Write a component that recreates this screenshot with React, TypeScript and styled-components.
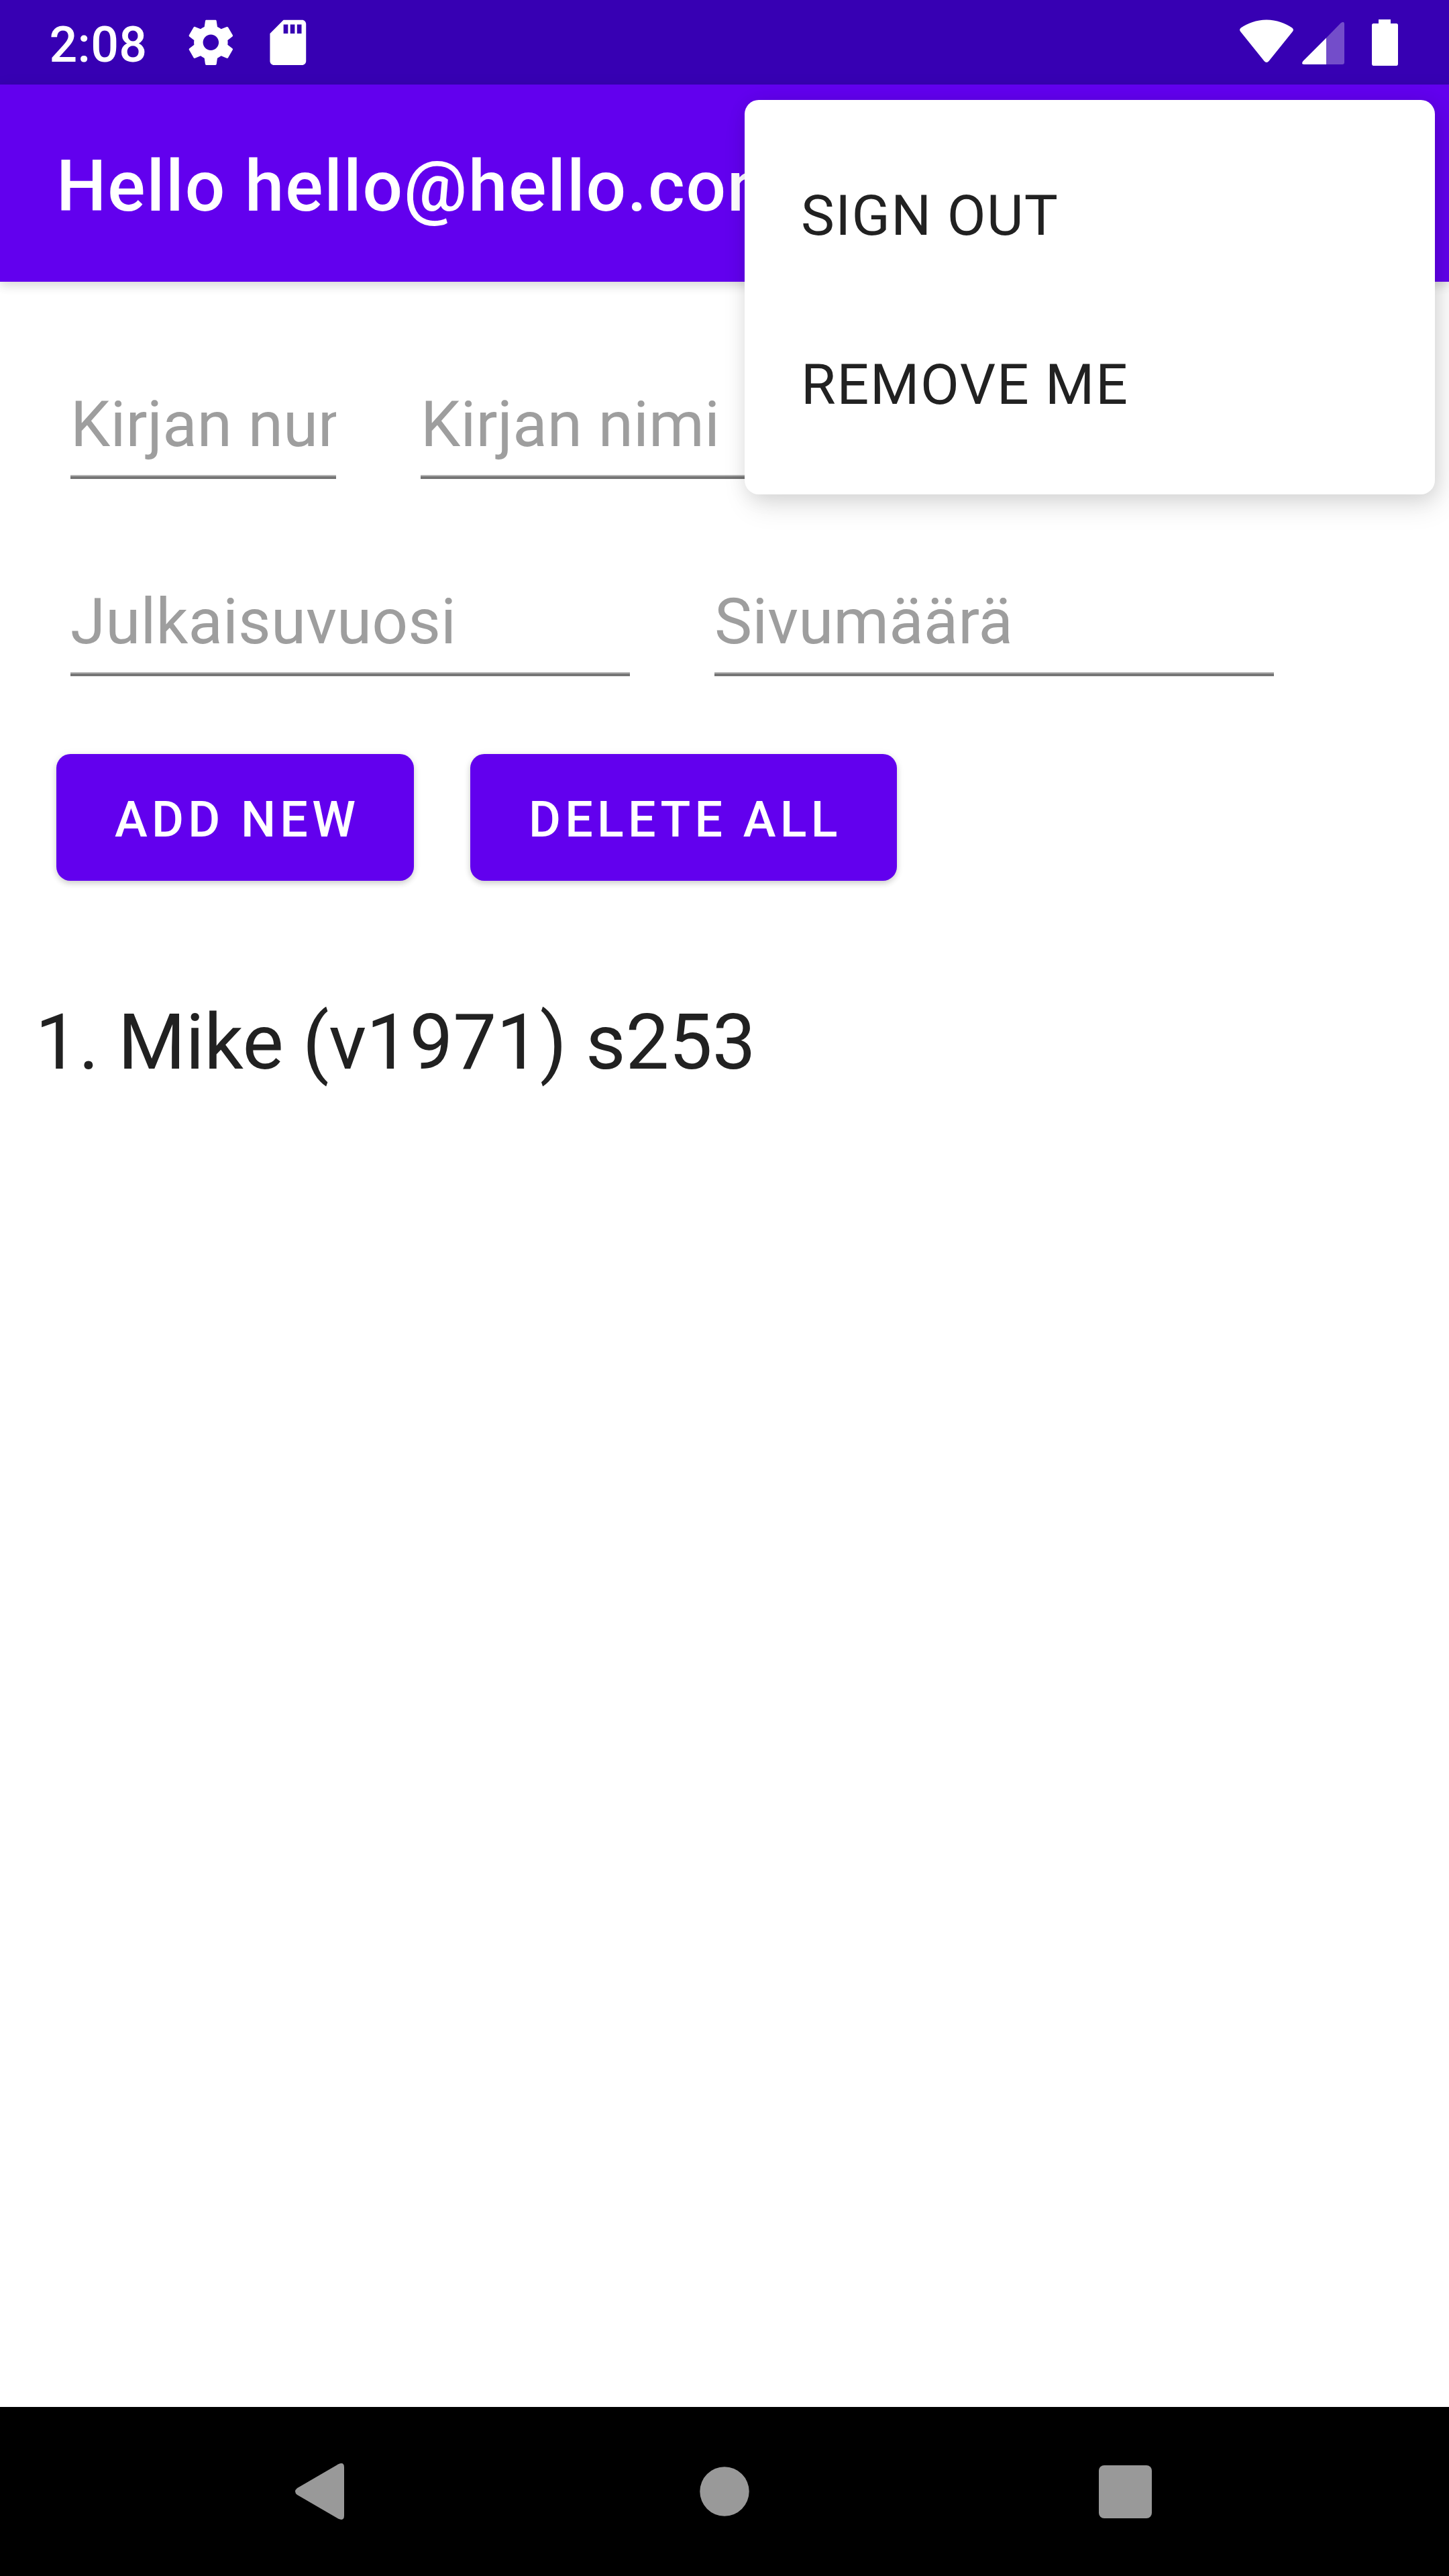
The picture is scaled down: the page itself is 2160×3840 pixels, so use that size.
import React from "react";
import styled, { createGlobalStyle } from "styled-components";

const GlobalStyle = createGlobalStyle`
  * { box-sizing: border-box; }
  body { margin: 0; background: #fff; }
`;

const Screen = styled.div`
  position: relative;
  width: 2160px;
  height: 3840px;
  display: flex;
  flex-direction: column;
  overflow: hidden;
  background: #fff;
  color: #212121;
  font-family: Roboto, "Noto Sans", sans-serif;
`;

const StatusBar = styled.header`
  height: 126px;
  flex: none;
  display: flex;
  justify-content: space-between;
  background: #3700b3;
  color: #fff;
  padding: 0 76px 0 73.5px;
`;

const StatusGroup = styled.div`
  display: flex;
  align-items: flex-start;
`;

const Clock = styled.span`
  font-size: 73.5px;
  font-weight: 500;
  line-height: 86px;
  letter-spacing: 0.3px;
  margin-top: 24px;
  width: 200.5px;
`;

const StatusIcon = styled.svg<{ $top: number; $gap?: number }>`
  display: block;
  flex: none;
  margin-top: ${(p) => p.$top}px;
  margin-left: ${(p) => p.$gap ?? 0}px;
  fill: #fff;
`;

const AppBar = styled.div`
  height: 294px;
  flex: none;
  display: flex;
  align-items: center;
  padding: 0 84px;
  background: #6200ee;
  color: #fff;
  box-shadow: 0 6px 14px rgba(0, 0, 0, 0.12), 0 2px 24px rgba(0, 0, 0, 0.05);
`;

const Title = styled.h1`
  margin: 0;
  padding-top: 11px;
  font-size: 105px;
  font-weight: 500;
  line-height: 124px;
  letter-spacing: 1.85px;
  white-space: nowrap;
`;

const Content = styled.main`
  flex: 1;
  display: flex;
  flex-direction: column;
`;

const FieldRow = styled.div`
  display: flex;
  gap: 126px;
  height: 294px;
  padding: 0 105px;
  align-items: flex-end;
`;

const Field = styled.div<{ $width: number }>`
  width: ${(p) => p.$width}px;
  height: 148px;
  overflow: hidden;
  white-space: nowrap;
  font-size: 94.5px;
  line-height: 111px;
  padding-top: 11px;
  letter-spacing: 0.1px;
  color: #9e9e9e;
  background: linear-gradient(#b4b4b4 0 2px, #757575 2px 6px) left bottom / 100% 6px no-repeat;
`;

const ButtonRow = styled.div`
  display: flex;
  gap: 84px;
  padding: 116px 84px 0;
`;

const Button = styled.button<{ $width: number }>`
  width: ${(p) => p.$width}px;
  height: 189px;
  border: 0;
  border-radius: 21px;
  padding: 6px 0 0 87px;
  text-align: left;
  white-space: nowrap;
  background: #6200ee;
  color: #fff;
  font-family: inherit;
  font-size: 73.5px;
  font-weight: 500;
  letter-spacing: 6.25px;
  box-shadow: 0 4px 8px rgba(0, 0, 0, 0.16), 0 1px 14px rgba(0, 0, 0, 0.06);
`;

const BookList = styled.ul`
  list-style: none;
  margin: 0;
  padding: 173px 52.5px 0;
`;

const Book = styled.li`
  font-size: 115.5px;
  line-height: 136px;
  letter-spacing: -0.23px;
`;

const Menu = styled.div`
  position: absolute;
  left: 1110px;
  top: 149px;
  width: 1029px;
  height: 588px;
  padding: 42px 0;
  border-radius: 21px;
  background: #fff;
  box-shadow: 6px 18px 40px rgba(0, 0, 0, 0.1), 3px 4px 30px rgba(0, 0, 0, 0.1);
`;

const MenuItem = styled.div<{ $tracking: number }>`
  height: 252px;
  display: flex;
  align-items: center;
  padding: 8px 84px 0;
  font-size: 84px;
  letter-spacing: ${(p) => p.$tracking}px;
`;

const NavBar = styled.nav`
  height: 252px;
  flex: none;
  display: flex;
  align-items: center;
  padding-left: 440px;
  background: #000;
`;

const NavIcon = styled.svg<{ $gap?: number }>`
  display: block;
  flex: none;
  margin-left: ${(p) => p.$gap ?? 0}px;
  fill: #999;
`;

export default function App() {
  return (
    <Screen>
      <GlobalStyle />
      <StatusBar>
        <StatusGroup>
          <Clock>2:08</Clock>
          <StatusIcon $top={23.3} width="80.7" height="80.7" viewBox="0 0 24 24">
            <path d="M19.43 12.98c.04-.32.07-.64.07-.98s-.03-.66-.07-.98l2.11-1.65c.19-.15.24-.42.12-.64l-2-3.46c-.12-.22-.39-.3-.61-.22l-2.49 1c-.52-.4-1.08-.73-1.69-.98l-.38-2.65C14.46 2.18 14.25 2 14 2h-4c-.25 0-.46.18-.49.42l-.38 2.65c-.61.25-1.17.59-1.69.98l-2.49-1c-.23-.09-.49 0-.61.22l-2 3.46c-.13.22-.07.49.12.64l2.11 1.65c-.04.32-.07.65-.07.98s.03.66.07.98l-2.11 1.65c-.19.15-.24.42-.12.64l2 3.46c.12.22.39.3.61.22l2.49-1c.52.4 1.08.73 1.69.98l.38 2.65c.03.24.24.42.49.42h4c.25 0 .46-.18.49-.42l.38-2.65c.61-.25 1.17-.59 1.69-.98l2.49 1c.23.09.49 0 .61-.22l2-3.46c.12-.22.07-.49-.12-.64l-2.11-1.65zM12 15.5c-1.93 0-3.5-1.57-3.5-3.5s1.57-3.5 3.5-3.5 3.5 1.57 3.5 3.5-1.57 3.5-3.5 3.5z" />
          </StatusIcon>
          <StatusIcon $top={23.3} $gap={34.6} width="80.7" height="80.7" viewBox="0 0 24 24">
            <path d="M18.200 2H10L4 8v12.200c0 1 .8 1.800 1.800 1.800h12.400c1 0 1.800-.8 1.800-1.800V3.800c0-1-.8-1.800-1.800-1.800zM12 8h-2V4h2v4zm3 0h-2V4h2v4zm3 0h-2V4h2v4z" />
          </StatusIcon>
        </StatusGroup>
        <StatusGroup>
          <StatusIcon $top={29} width="80" height="64" viewBox="0 0 80 64">
            <path d="M40 0.5C25 .5 12 5.500 1.800 12.500Q-1.500 15 1.500 18.500L36.500 62Q40 66 43.500 62L78.500 18.500Q81.500 15 78.200 12.500C68 5.500 55 .5 40 .5Z" />
          </StatusIcon>
          <StatusIcon $top={33} $gap={13} width="63" height="63" viewBox="0 0 63 63">
            <path fillOpacity="0.3" d="M36 23.500L58 1Q63-2 63 3V60Q63 63 60 63H36Z" />
            <path d="M36 23.500L1.500 58Q-2 63 3 63H36Z" />
          </StatusIcon>
          <StatusIcon $top={29} $gap={41} width="39" height="69" viewBox="0 0 39 69">
            <path d="M10 0H28V6H36.500Q39 6 39 8.500V66Q39 69 36.500 69H2.500Q0 69 0 66V8.500Q0 6 2.500 6H10Z" />
          </StatusIcon>
        </StatusGroup>
      </StatusBar>
      <AppBar>
        <Title>Hello hello@hello.com</Title>
      </AppBar>
      <Content>
        <FieldRow>
          <Field $width={396}>Kirjan num</Field>
          <Field $width={1272}>Kirjan nimi</Field>
        </FieldRow>
        <FieldRow>
          <Field $width={834}>Julkaisuvuosi</Field>
          <Field $width={834}>Sivumäärä</Field>
        </FieldRow>
        <ButtonRow>
          <Button $width={533}>ADD NEW</Button>
          <Button $width={636}>DELETE ALL</Button>
        </ButtonRow>
        <BookList>
          <Book>1. Mike (v1971) s253</Book>
        </BookList>
      </Content>
      <NavBar>
        <NavIcon width="73" height="84" viewBox="0 0 73 84">
          <path d="M64.500 1.200Q73-2.500 73 6V78Q73 86.500 64.500 82.800L3 47Q-3 42 3 37Z" />
        </NavIcon>
        <NavIcon $gap={529.5} width="74" height="74" viewBox="0 0 74 74">
          <circle cx="37" cy="37" r="36.700" />
        </NavIcon>
        <NavIcon $gap={521} width="79" height="79" viewBox="0 0 79 79">
          <rect width="79" height="79" rx="8" />
        </NavIcon>
      </NavBar>
      <Menu>
        <MenuItem $tracking={1.4}>SIGN OUT</MenuItem>
        <MenuItem $tracking={1.75}>REMOVE ME</MenuItem>
      </Menu>
    </Screen>
  );
}
